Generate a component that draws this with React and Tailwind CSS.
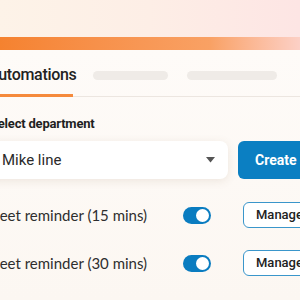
export default function App() {
  return (
    <div className="w-[300px] h-[300px] overflow-hidden bg-[#fcf8f4] font-['Roboto',sans-serif]">
      <div className="h-[37px] bg-gradient-to-r from-[#fdf3e8] via-[#fdeee6] to-[#fde5e4]" />
      <div className="h-[13px] bg-gradient-to-r from-[#f5822f] via-[#f9a164] via-70% to-[#fcd0c6]" />
      <div className="w-[340px] -ml-[12px] h-[250px] bg-gradient-to-b from-[#fefbf8] to-[#fcf7f2]">
        <div className="flex items-stretch h-[47px] border-b border-[#ece6e0]">
          <div className="w-[85px] flex items-center pt-[6px] border-b-[3px] border-[#f58a3c] -mb-px">
            <span className="text-[16px] font-medium text-[#222] tracking-[-0.3px]">Automations</span>
          </div>
          <div className="flex items-center gap-[19px] ml-[20px] pt-[4px]">
            <div className="w-[75px] h-[9px] rounded-full bg-[#efebe7]" />
            <div className="w-[90px] h-[9px] rounded-full bg-[#efebe7]" />
          </div>
        </div>
        <div className="pt-[19px] ml-[2px] text-[13px] font-bold text-[#1f1f1f] leading-[16px] tracking-[-0.2px]">Select department</div>
        <div className="flex gap-[10px] mt-[9px]">
          <div className="w-[240px] h-[38px] bg-white rounded-[8px] shadow-[0_2px_10px_rgba(120,90,60,0.12)] flex items-center justify-between pl-[14px] pr-[13px]">
            <span className="text-[15px] text-[#2a2a2a]">Mike line</span>
            <svg width="9" height="6" viewBox="0 0 9 6"><path d="M0 0 L9 0 L4.5 5.5 Z" fill="#555" /></svg>
          </div>
          <div className="h-[38px] w-[80px] bg-[#0b7fc2] rounded-[6px] flex items-center pl-[17px] text-white text-[14px] font-bold">Create</div>
        </div>
        <div className="mt-[23px] flex flex-col gap-[22px]">
          {["Meet reminder (15 mins)", "Meet reminder (30 mins)"].map((t) => (
            <div key={t} className="flex items-center h-[26px]">
              <span className="w-[197px] -ml-[2px] font-['Lato',sans-serif] text-[15px] text-[#2e2e2e]">{t}</span>
              <div className="w-[28px] h-[17px] rounded-full bg-[#0a7cc0] flex items-center justify-end pr-[2px]">
                <div className="w-[13px] h-[13px] rounded-full bg-white" />
              </div>
              <div className="ml-[32px] h-[26px] w-[70px] border-[1.5px] border-[#3a96cb] rounded-[6px] bg-white flex items-center pl-[12px] text-[13px] font-medium text-[#222]">Manage</div>
            </div>
          ))}
        </div>
      </div>
    </div>
  );
}
